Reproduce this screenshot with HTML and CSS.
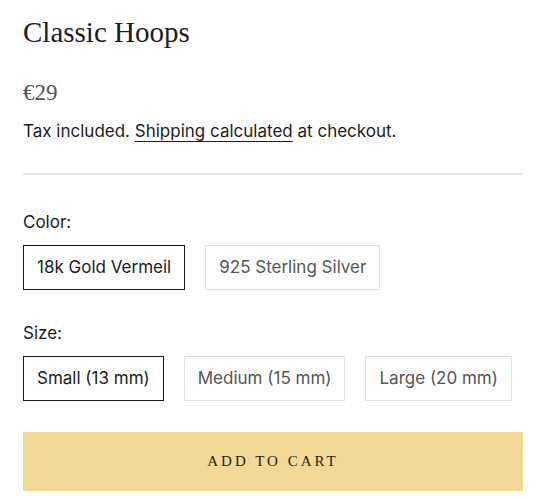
FILE: index.html
```html
<!DOCTYPE html>
<html>
<head>
<meta charset="utf-8">
<link rel="stylesheet" href="styles.css">
</head>
<body>
<div class="product">
  <h1 class="title">Classic Hoops</h1>
  <div class="price">€29</div>
  <p class="tax">Tax included. <a href="#" class="link">Shipping calculated</a> at checkout.</p>
  <hr class="divider">
  <div class="option">
    <div class="label">Color:</div>
    <div class="choices">
      <span class="choice selected">18k Gold Vermeil</span>
      <span class="choice">925 Sterling Silver</span>
    </div>
  </div>
  <div class="option">
    <div class="label">Size:</div>
    <div class="choices">
      <span class="choice selected">Small (13 mm)</span>
      <span class="choice">Medium (15 mm)</span>
      <span class="choice">Large (20 mm)</span>
    </div>
  </div>
  <button class="cart">ADD TO CART</button>
</div>
</body>
</html>
```
FILE: styles.css
```css
html, body {
  margin: 0;
  padding: 0;
  background: #ffffff;
}
.product {
  padding: 14px 23px 0 23px;
  font-family: Inter, "Liberation Sans", sans-serif;
  color: #1c1c1c;
}
.title {
  font-family: "Liberation Serif", serif;
  font-weight: normal;
  font-size: 29px;
  line-height: 36px;
  margin: 0;
  color: #1c1c1c;
}
.price {
  font-family: "Liberation Serif", serif;
  font-size: 23px;
  line-height: 28px;
  color: #555555;
  margin-top: 29px;
}
.tax {
  font-size: 17px;
  line-height: 24px;
  margin: 12px 0 0 0;
}
.link {
  color: #1c1c1c;
  text-decoration: underline;
  text-underline-offset: 4px;
  text-decoration-thickness: 1px;
}
.divider {
  border: none;
  border-top: 2px solid #e6e6e6;
  margin: 30px 0 0 0;
}
.option {
  margin-top: 37px;
}
.option + .option {
  margin-top: 33px;
}
.label {
  font-size: 17px;
  line-height: 20px;
  color: #1c1c1c;
}
.choices {
  display: flex;
  gap: 20px;
  margin-top: 13px;
}
.choice {
  border: 1.5px solid #e2e2e2;
  padding: 11px 13px;
  font-size: 17px;
  line-height: 21px;
  color: #555555;
}
.choice.selected {
  border-color: #1c1c1c;
  color: #1c1c1c;
}
.cart {
  display: block;
  width: 100%;
  margin-top: 31px;
  height: 59px;
  border: none;
  background: #f2da96;
  font-family: "Liberation Serif", serif;
  font-size: 15px;
  letter-spacing: 3px;
  color: #1c1c1c;
}
```
